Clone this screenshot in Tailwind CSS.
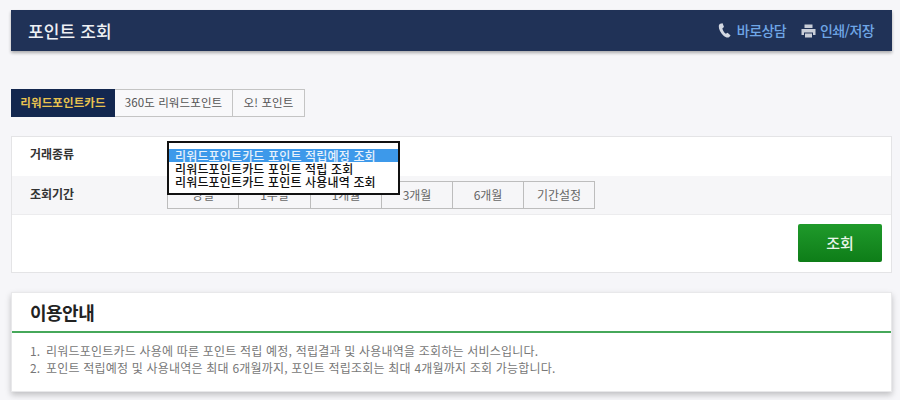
<!DOCTYPE html>
<html lang="ko">
<head>
<meta charset="utf-8">
<script src="https://cdn.jsdelivr.net/npm/@tailwindcss/browser@4"></script>
</head>
<body class="w-[900px] h-[400px] overflow-hidden bg-[#f6f6f9] font-['Noto_Sans_CJK_KR','Noto_Sans',sans-serif]">
<div class="pt-[10px] pl-[11px] pr-[8px] flex flex-col">
  <header class="h-[41px] bg-[#203257] flex items-center justify-between pl-[17px] pr-[18px] shadow-[0_2px_3px_rgba(0,0,0,0.3)]">
    <h1 class="text-[17px] font-medium text-[#eef0f4] tracking-[0.15px]">포인트 조회</h1>
    <div class="flex items-center text-[14px] font-medium text-[#6fa6e6] tracking-[-0.6px]">
      <svg class="w-[14px] h-[15px] mr-[5px]" viewBox="0 0 14 15"><path d="M2.2 0.8 L4.6 0.2 L6 4 L4.4 5.2 C4.6 7.2 6 9.6 7.8 10.8 L9.6 9.8 L12.6 12.4 L11 14.2 C9.6 15 7.6 14.6 5.6 12.8 C2.6 10.2 0.6 6.2 0.8 3 C0.9 2 1.4 1.2 2.2 0.8 Z" fill="#d3d8e2"/></svg>
      <span>바로상담</span>
      <svg class="w-[15px] h-[14px] ml-[15px] mr-[4px]" viewBox="0 0 15 14"><path d="M3.5 0.5 H11.5 V4 H3.5 Z M0.5 5 H14.5 V11 H12 V8.5 H3 V11 H0.5 Z M4 9.5 H11 V13.5 H4 Z" fill="#c9ced8"/></svg>
      <span>인쇄/저장</span>
    </div>
  </header>

  <nav class="flex mt-[38px] h-[28px] text-[11.5px] tracking-[0.1px]">
    <div class="w-[104px] bg-[#13274f] text-[#e8c24f] font-bold flex items-center justify-center">리워드포인트카드</div>
    <div class="w-[118px] bg-[#f8f8fa] text-[#555] border border-l-0 border-[#c4c4c4] flex items-center justify-center">360도 리워드포인트</div>
    <div class="w-[72px] bg-[#f8f8fa] text-[#555] border border-l-0 border-[#c4c4c4] flex items-center justify-center">오! 포인트</div>
  </nav>

  <section class="mt-[19px] bg-white border border-[#e4e4e6] h-[137px] flex flex-col relative">
    <div class="h-[39px] flex items-center pl-[18px] pb-[5px] text-[12px] font-bold text-[#333]">거래종류</div>
    <div class="h-[39px] bg-[#f6f6f8] border-b border-[#ececee] flex items-center text-[12px]">
      <div class="w-[155px] pl-[18px] pb-[3px] font-bold text-[#333]">조회기간</div>
      <div class="flex h-[28px] text-[#666] tracking-[-0.1px]">
        <div class="w-[72px] border border-[#bdbdbd] flex items-center justify-center">당일</div>
        <div class="w-[72px] border border-l-0 border-[#bdbdbd] flex items-center justify-center">1주일</div>
        <div class="w-[71px] border border-l-0 border-[#bdbdbd] flex items-center justify-center">1개월</div>
        <div class="w-[71px] border border-l-0 border-[#bdbdbd] flex items-center justify-center">3개월</div>
        <div class="w-[71px] border border-l-0 border-[#bdbdbd] flex items-center justify-center">6개월</div>
        <div class="w-[71px] border border-l-0 border-[#bdbdbd] flex items-center justify-center">기간설정</div>
      </div>
    </div>
    <div class="flex-1 flex justify-end items-start pt-[9px] pr-[9px]">
      <button class="w-[84px] h-[38px] rounded-[2px] bg-gradient-to-b from-[#1f9a2b] to-[#0e7d18] text-[#eaf6ea] text-[15px] font-medium">조회</button>
    </div>
    <div class="absolute left-[155px] top-[4px] w-[233px] h-[54px] bg-white border-2 border-[#111] pt-[6px] text-[12px] leading-[13px] text-[#111] tracking-[0.15px] font-medium">
      <div class="bg-[#3d99ea] text-[#e8f2fc] pl-[6px]">리워드포인트카드 포인트 적립예정 조회</div>
      <div class="pl-[6px]">리워드포인트카드 포인트 적립 조회</div>
      <div class="pl-[6px]">리워드포인트카드 포인트 사용내역 조회</div>
    </div>
  </section>

  <section class="mt-[19px] bg-white border border-[#e8e8ea] h-[100px] shadow-[0_3px_6px_rgba(0,0,0,0.22)]">
    <h2 class="h-[40px] border-b-2 border-[#46a85a] flex items-center pl-[18px] text-[18px] font-bold text-[#222] tracking-[-0.5px]">이용안내</h2>
    <ol class="pt-[9px] pl-[18px] text-[12px] leading-[17px] text-[#777] tracking-[0.2px]">
      <li class="flex"><span class="w-[16px]">1.</span><span>리워드포인트카드 사용에 따른 포인트 적립 예정, 적립결과 및 사용내역을 조회하는 서비스입니다.</span></li>
      <li class="flex"><span class="w-[16px]">2.</span><span>포인트 적립예정 및 사용내역은 최대 6개월까지, 포인트 적립조회는 최대 4개월까지 조회 가능합니다.</span></li>
    </ol>
  </section>
</div>
</body>
</html>
